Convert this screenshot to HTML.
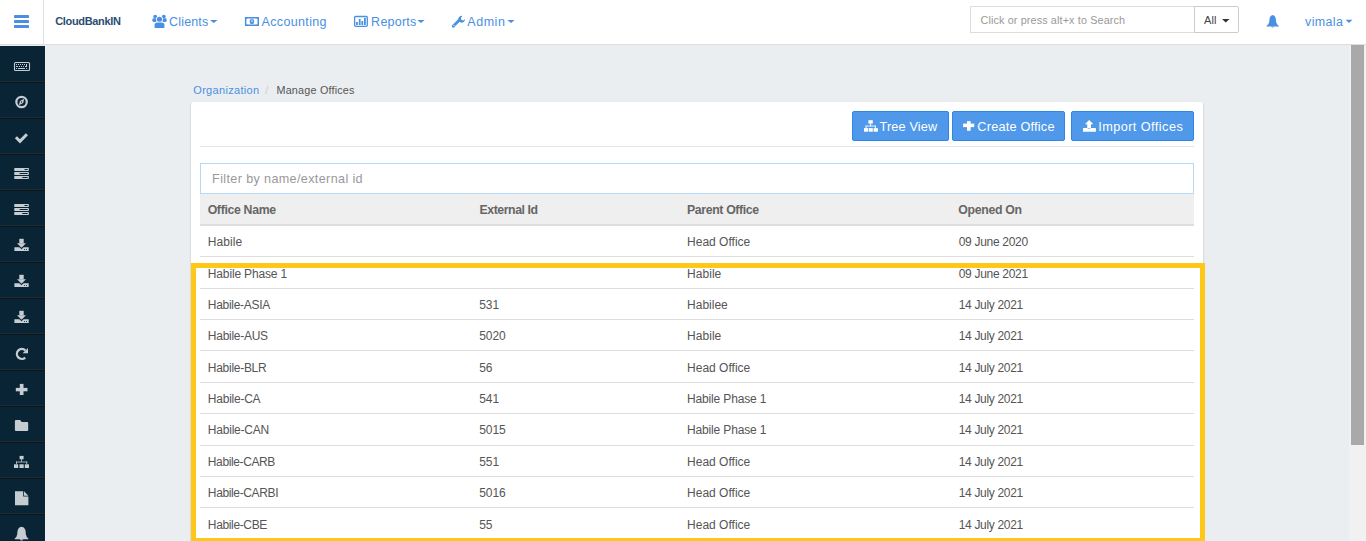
<!DOCTYPE html>
<html><head><meta charset="utf-8">
<style>
*{box-sizing:border-box;margin:0;padding:0}
html,body{width:1366px;height:541px;overflow:hidden}
body{position:relative;background:#ebeef1;font-family:"Liberation Sans",sans-serif;color:#555}
.abs{position:absolute}
.t{position:absolute;white-space:nowrap;line-height:1;font-family:"Liberation Sans",sans-serif}
#nav{left:0;top:0;width:1366px;height:45px;background:#fff;border-bottom:1px solid #ddd}
#vdiv{left:43px;top:0;width:1px;height:44px;background:#e2e2e2}
#side{left:0;top:46px;width:45px;height:495px;background:#092434}
#sidestrip{left:45px;top:45px;width:1px;height:496px;background:#f0f1f2}
.sep{position:absolute;left:0;width:45px;height:2px;border-top:1px solid #1e2c35;background:#0e1418}
#scroll{left:1349px;top:45px;width:17px;height:496px;background:#f1f1f1}
#thumb{left:1351px;top:45px;width:13px;height:400px;background:#a9a9a9}
#card{left:191px;top:102px;width:1012px;height:460px;background:#fff;border-radius:2px;box-shadow:0 1px 2px rgba(0,0,0,0.24)}
.btn{top:111px;height:30px;background:#5098e9;border:1px solid #2f86e6;border-radius:2px}
#hr{left:200px;top:146px;width:994px;height:1px;background:#e5e5e5}
#filter{left:200px;top:163px;width:994px;height:31px;border:1px solid #b5d9f8;background:#fff}
#thead{left:200px;top:194px;width:994px;height:32px;background:#efefef;border-bottom:2px solid #ddd}
.ln{position:absolute;left:200px;width:994px;height:1px;background:#ddd}
#hl{left:191px;top:263px;width:1014px;height:280px;border:5px solid #ffc819}
#search{left:970px;top:6px;width:225px;height:27px;border:1px solid #ddd;border-right:none;background:#fff}
#allbtn{left:1194px;top:6px;width:45px;height:27px;border:1px solid #ccc;border-radius:0 2px 2px 0;background:#fff}
#ov{position:absolute;left:0;top:0;width:1366px;height:541px;pointer-events:none}
</style></head>
<body>
<div id="nav" class="abs"><div id="vdiv" class="abs"></div></div>
<div id="search" class="abs"></div>
<div id="allbtn" class="abs"></div>
<div id="side" class="abs">
<div class="sep" style="top:35px"></div><div class="sep" style="top:71px"></div><div class="sep" style="top:107px"></div><div class="sep" style="top:143px"></div><div class="sep" style="top:179px"></div><div class="sep" style="top:215px"></div><div class="sep" style="top:251px"></div><div class="sep" style="top:287px"></div><div class="sep" style="top:323px"></div><div class="sep" style="top:359px"></div><div class="sep" style="top:395px"></div><div class="sep" style="top:431px"></div><div class="sep" style="top:467px"></div>
</div>
<div id="sidestrip" class="abs"></div>
<div id="scroll" class="abs"></div>
<div id="thumb" class="abs"></div>
<div id="card" class="abs"></div>
<div class="abs btn" style="left:852px;width:97px"></div>
<div class="abs btn" style="left:952px;width:113px"></div>
<div class="abs btn" style="left:1071px;width:123px"></div>
<div id="hr" class="abs"></div>
<div id="filter" class="abs"></div>
<div id="thead" class="abs"></div>
<div class="ln" style="top:256px"></div><div class="ln" style="top:288px"></div><div class="ln" style="top:319px"></div><div class="ln" style="top:350px"></div><div class="ln" style="top:382px"></div><div class="ln" style="top:413px"></div><div class="ln" style="top:445px"></div><div class="ln" style="top:476px"></div><div class="ln" style="top:507px"></div>
<div class="t" style="left:55.17px;top:15.69px;font-size:11px;color:#2b4d70;letter-spacing:-0.324px;font-weight:bold">CloudBankIN</div>
<div class="t" style="left:169.12px;top:15.92px;font-size:12.5px;color:#4a90e2;letter-spacing:0.152px">Clients</div>
<div class="t" style="left:261.62px;top:15.92px;font-size:12.5px;color:#4a90e2;letter-spacing:0.336px">Accounting</div>
<div class="t" style="left:371.12px;top:15.92px;font-size:12.5px;color:#4a90e2;letter-spacing:0.241px">Reports</div>
<div class="t" style="left:467.32px;top:15.92px;font-size:12.5px;color:#4a90e2;letter-spacing:0.525px">Admin</div>
<div class="t" style="left:1305.12px;top:15.52px;font-size:12.5px;color:#4a90e2;letter-spacing:0.332px">vimala</div>
<div class="t" style="left:980.48px;top:14.96px;font-size:10.8px;color:#999;letter-spacing:0.133px">Click or press alt+x to Search</div>
<div class="t" style="left:1203.97px;top:14.69px;font-size:11px;color:#444;letter-spacing:0.097px">All</div>
<div class="t" style="left:193.27px;top:84.79px;font-size:11px;color:#4a90e2;letter-spacing:0.318px">Organization</div>
<div class="t" style="left:265.27px;top:84.79px;font-size:11px;color:#ccc;letter-spacing:0.977px">/</div>
<div class="t" style="left:276.48px;top:84.96px;font-size:10.8px;color:#555;letter-spacing:0.199px">Manage Offices</div>
<div class="t" style="left:879.62px;top:120.85px;font-size:12.7px;color:#fff;letter-spacing:0.128px">Tree View</div>
<div class="t" style="left:977.32px;top:120.85px;font-size:12.7px;color:#fff;letter-spacing:0.222px">Create Office</div>
<div class="t" style="left:1098.22px;top:120.85px;font-size:12.7px;color:#fff;letter-spacing:0.444px">Import Offices</div>
<div class="t" style="left:212.12px;top:172.93px;font-size:12.6px;color:#999;letter-spacing:0.363px">Filter by name/external id</div>
<div class="t" style="left:207.63px;top:203.79px;font-size:12.3px;color:#666;letter-spacing:-0.324px;font-weight:bold">Office Name</div>
<div class="t" style="left:479.53px;top:203.79px;font-size:12.3px;color:#666;letter-spacing:-0.434px;font-weight:bold">External Id</div>
<div class="t" style="left:687.03px;top:203.79px;font-size:12.3px;color:#666;letter-spacing:-0.365px;font-weight:bold">Parent Office</div>
<div class="t" style="left:958.33px;top:203.79px;font-size:12.3px;color:#666;letter-spacing:-0.331px;font-weight:bold">Opened On</div>
<div class="t" style="left:207.84px;top:235.84px;font-size:12px;color:#555;letter-spacing:0.044px">Habile</div>
<div class="t" style="left:687.04px;top:235.84px;font-size:12px;color:#555;letter-spacing:0.012px">Head Office</div>
<div class="t" style="left:958.64px;top:235.84px;font-size:12px;color:#555;letter-spacing:-0.295px">09 June 2020</div>
<div class="t" style="left:207.84px;top:267.84px;font-size:12px;color:#555;letter-spacing:-0.153px">Habile Phase 1</div>
<div class="t" style="left:687.04px;top:267.84px;font-size:12px;color:#555;letter-spacing:0.044px">Habile</div>
<div class="t" style="left:958.64px;top:267.84px;font-size:12px;color:#555;letter-spacing:-0.295px">09 June 2021</div>
<div class="t" style="left:207.84px;top:298.84px;font-size:12px;color:#555;letter-spacing:-0.296px">Habile-ASIA</div>
<div class="t" style="left:479.24px;top:298.84px;font-size:12px;color:#555;letter-spacing:-0.090px">531</div>
<div class="t" style="left:687.04px;top:298.84px;font-size:12px;color:#555;letter-spacing:0.010px">Habilee</div>
<div class="t" style="left:958.64px;top:298.84px;font-size:12px;color:#555;letter-spacing:-0.309px">14 July 2021</div>
<div class="t" style="left:207.84px;top:329.84px;font-size:12px;color:#555;letter-spacing:-0.270px">Habile-AUS</div>
<div class="t" style="left:479.24px;top:329.84px;font-size:12px;color:#555;letter-spacing:-0.089px">5020</div>
<div class="t" style="left:687.04px;top:329.84px;font-size:12px;color:#555;letter-spacing:0.044px">Habile</div>
<div class="t" style="left:958.64px;top:329.84px;font-size:12px;color:#555;letter-spacing:-0.309px">14 July 2021</div>
<div class="t" style="left:207.84px;top:361.84px;font-size:12px;color:#555;letter-spacing:-0.279px">Habile-BLR</div>
<div class="t" style="left:479.24px;top:361.84px;font-size:12px;color:#555;letter-spacing:-0.093px">56</div>
<div class="t" style="left:687.04px;top:361.84px;font-size:12px;color:#555;letter-spacing:0.012px">Head Office</div>
<div class="t" style="left:958.64px;top:361.84px;font-size:12px;color:#555;letter-spacing:-0.309px">14 July 2021</div>
<div class="t" style="left:207.84px;top:392.84px;font-size:12px;color:#555;letter-spacing:-0.236px">Habile-CA</div>
<div class="t" style="left:479.24px;top:392.84px;font-size:12px;color:#555;letter-spacing:-0.090px">541</div>
<div class="t" style="left:687.04px;top:392.84px;font-size:12px;color:#555;letter-spacing:-0.153px">Habile Phase 1</div>
<div class="t" style="left:958.64px;top:392.84px;font-size:12px;color:#555;letter-spacing:-0.309px">14 July 2021</div>
<div class="t" style="left:207.84px;top:423.84px;font-size:12px;color:#555;letter-spacing:-0.211px">Habile-CAN</div>
<div class="t" style="left:479.24px;top:423.84px;font-size:12px;color:#555;letter-spacing:-0.089px">5015</div>
<div class="t" style="left:687.04px;top:423.84px;font-size:12px;color:#555;letter-spacing:-0.153px">Habile Phase 1</div>
<div class="t" style="left:958.64px;top:423.84px;font-size:12px;color:#555;letter-spacing:-0.309px">14 July 2021</div>
<div class="t" style="left:207.84px;top:455.84px;font-size:12px;color:#555;letter-spacing:-0.383px">Habile-CARB</div>
<div class="t" style="left:479.24px;top:455.84px;font-size:12px;color:#555;letter-spacing:-0.090px">551</div>
<div class="t" style="left:687.04px;top:455.84px;font-size:12px;color:#555;letter-spacing:0.012px">Head Office</div>
<div class="t" style="left:958.64px;top:455.84px;font-size:12px;color:#555;letter-spacing:-0.309px">14 July 2021</div>
<div class="t" style="left:207.84px;top:486.84px;font-size:12px;color:#555;letter-spacing:-0.362px">Habile-CARBI</div>
<div class="t" style="left:479.24px;top:486.84px;font-size:12px;color:#555;letter-spacing:-0.089px">5016</div>
<div class="t" style="left:687.04px;top:486.84px;font-size:12px;color:#555;letter-spacing:0.012px">Head Office</div>
<div class="t" style="left:958.64px;top:486.84px;font-size:12px;color:#555;letter-spacing:-0.309px">14 July 2021</div>
<div class="t" style="left:207.84px;top:518.84px;font-size:12px;color:#555;letter-spacing:-0.356px">Habile-CBE</div>
<div class="t" style="left:479.24px;top:518.84px;font-size:12px;color:#555;letter-spacing:-0.093px">55</div>
<div class="t" style="left:687.04px;top:518.84px;font-size:12px;color:#555;letter-spacing:0.012px">Head Office</div>
<div class="t" style="left:958.64px;top:518.84px;font-size:12px;color:#555;letter-spacing:-0.309px">14 July 2021</div>
<div id="hl" class="abs"></div>
<svg id="ov" width="1366" height="541">
<g fill="#4a90e2">
<rect x="14" y="15" width="15" height="3" rx="0.4"/>
<rect x="14" y="20" width="15" height="3" rx="0.4"/>
<rect x="14" y="25" width="15" height="3" rx="0.4"/>
<!-- users -->
<circle cx="155.2" cy="16.6" r="1.9"/>
<rect x="152.3" y="18.3" width="4.6" height="3.6" rx="1.4"/>
<circle cx="163.8" cy="16.6" r="1.9"/>
<rect x="162.1" y="18.3" width="4.6" height="3.6" rx="1.4"/>
<circle cx="159.5" cy="19.3" r="3.4" fill="#fff"/>
<circle cx="159.5" cy="19.3" r="2.6"/>
<path d="M153.8 28.4 V25.3 Q153.8 21.7 157.2 21.7 H161.8 Q165.2 21.7 165.2 25.3 V28.4 Z" fill="#fff"/>
<path d="M154.6 27.9 V25.2 Q154.6 22.5 157.3 22.5 H161.7 Q164.4 22.5 164.4 25.2 V27.9 Z"/>
<!-- money -->
<path fill-rule="evenodd" d="M244.9 16.9 H259 V25.9 H244.9 Z M246.4 18.4 Q247.3 19.5 247.3 18.4 H256.6 Q256.6 19.5 257.5 18.4 V24.4 Q256.6 23.4 256.6 24.4 H247.3 Q247.3 23.4 246.4 24.4 Z"/>
<ellipse cx="251.9" cy="21.4" rx="2.2" ry="2.7"/>
<rect x="251.5" y="19.6" width="0.9" height="2.6" fill="#fff"/>
<!-- reports -->
<rect x="354.6" y="16.5" width="12.7" height="9.8" rx="1" fill="none" stroke="#4a90e2" stroke-width="1.3"/>
<rect x="356" y="22" width="1.8" height="3"/>
<rect x="358.8" y="19" width="1.8" height="6"/>
<rect x="361.4" y="21" width="1.8" height="4"/>
<rect x="364" y="18" width="1.8" height="7"/>
<!-- wrench -->
<path d="M453.2 26.2 L458.9 20.5" stroke="#4a90e2" stroke-width="2.8" stroke-linecap="round"/>
<path d="M458.2 19.6 A3.6 3.6 0 0 1 462.3 15.9 L460.9 17.7 L461.3 19.8 L463.4 20.4 L465.1 19.1 A3.6 3.6 0 0 1 460.6 22.6 Z"/>
<circle cx="454" cy="25.5" r="0.6" fill="#fff"/>
<!-- carets -->
<path d="M210 19.9 H217.6 L213.8 23 Z"/>
<path d="M417.3 20 H424.6 L421 23 Z"/>
<path d="M507.3 20 H514.7 L511 23 Z"/>
<path d="M1345.6 19.8 H1352.5 L1349 23 Z"/>
<!-- bell -->
<path d="M1272.6 15 Q1274.6 15.3 1275.4 17.3 Q1276 19 1276 21.5 Q1276.4 24.3 1278.8 26 V26.4 H1266.5 V26 Q1268.9 24.3 1269.3 21.5 Q1269.3 19 1269.9 17.3 Q1270.7 15.3 1272.6 15 Z"/>
<path d="M1271.2 26.5 A1.5 1.4 0 0 0 1274.1 26.5 Z"/>
</g>
<path d="M1222 19 H1229.5 L1225.75 22.4 Z" fill="#333"/>
<!-- button icons -->
<g fill="#fff">
<rect x="868.4" y="120.2" width="4.4" height="3.4"/>
<rect x="870.2" y="123.5" width="0.9" height="2.6"/>
<rect x="865.6" y="125.6" width="10.2" height="0.9"/>
<rect x="865.6" y="125.6" width="0.9" height="2.6"/>
<rect x="874.9" y="125.6" width="0.9" height="2.6"/>
<rect x="864" y="128.1" width="4.1" height="3.6"/>
<rect x="868.7" y="128.1" width="4.1" height="3.6"/>
<rect x="873.6" y="128.1" width="4.3" height="3.6"/>
<rect x="967" y="121.1" width="3.6" height="9.7"/>
<rect x="963.1" y="123.6" width="11.1" height="3.5"/>
<path d="M1089.1 119.9 L1093.4 124.2 H1091 V128.3 H1087.2 V124.2 H1084.9 Z"/>
<path d="M1083 128.1 H1087.3 Q1087.6 128.9 1089.1 128.9 Q1090.6 128.9 1090.9 128.1 H1095.9 V131.7 H1083 Z"/>
</g>
<!-- sidebar icons -->
<g fill="#c5cdd2">
<g>
<rect x="14.5" y="62.5" width="15" height="8" rx="1" fill="none" stroke="#c5cdd2" stroke-width="1.1"/>
<rect x="16" y="64" width="1" height="1"/><rect x="18" y="64" width="1" height="1"/><rect x="20" y="64" width="1" height="1"/><rect x="22" y="64" width="1" height="1"/><rect x="24" y="64" width="1" height="1"/><rect x="26" y="64" width="1" height="3"/>
<rect x="16" y="66" width="2" height="1"/><rect x="19" y="66" width="1" height="1"/><rect x="21" y="66" width="1" height="1"/><rect x="23" y="66" width="1" height="1"/><rect x="25" y="66" width="1" height="1"/>
<rect x="16" y="68" width="1" height="1"/><rect x="18" y="68" width="7" height="1"/><rect x="26" y="68" width="1" height="1"/>
</g>
<circle cx="21.55" cy="102" r="5.2" fill="none" stroke="#c5cdd2" stroke-width="2.2"/>
<path d="M24.2 98.7 L23.2 103.1 L18.9 105.3 L19.9 100.9 Z"/>
<circle cx="21.55" cy="102" r="0.7" fill="#092434"/>
<path d="M15.9 137.2 L20 141.3 L26.9 134.3" fill="none" stroke="#c5cdd2" stroke-width="3" stroke-linejoin="miter"/>
</g>
<g id="tasks" fill="#c5cdd2">
<rect x="14.2" y="168" width="14.7" height="3" rx="0.7"/>
<rect x="14.2" y="172" width="14.7" height="3" rx="0.7"/>
<rect x="14.2" y="176" width="14.7" height="3" rx="0.7"/>
<g fill="#092434">
<rect x="24.4" y="169" width="3.4" height="1.1" rx="0.5"/>
<rect x="19.5" y="173" width="8.3" height="1.1" rx="0.5"/>
<rect x="22.2" y="177" width="5.6" height="1.1" rx="0.5"/>
</g>
</g>
<use href="#tasks" y="36"/>
<g id="dl" fill="#c5cdd2">
<rect x="19.3" y="238.8" width="4.4" height="4.6"/>
<path d="M17 243.2 H26 L21.5 247.7 Z"/>
<path d="M14.4 247.2 H19.4 L21.5 249.2 L23.6 247.2 H28.7 V251 H14.4 Z"/>
<rect x="24" y="249.1" width="0.9" height="0.9" fill="#092434"/>
<rect x="26" y="249.1" width="0.9" height="0.9" fill="#092434"/>
</g>
<use href="#dl" y="36"/>
<use href="#dl" y="72"/>
<g fill="#c5cdd2">
<path d="M25.3 350.4 A4.95 4.95 0 1 0 25.2 357.6" fill="none" stroke="#c5cdd2" stroke-width="2.3"/>
<path d="M28 347.9 V353.3 H22.6 Z"/>
<rect x="19.8" y="383.9" width="3.7" height="11.1"/>
<rect x="15.8" y="387.9" width="11.7" height="3.4"/>
<path d="M14.9 421 Q14.9 419.9 16 419.9 H20.2 L21.6 422.1 H27.2 Q28.2 422.1 28.2 423.1 V430 Q28.2 431 27.2 431 H16 Q14.9 431 14.9 430 Z"/>
<rect x="19.6" y="455.9" width="4" height="3.4"/>
<rect x="21.2" y="459.2" width="0.8" height="2.6"/>
<rect x="16" y="461.6" width="11.2" height="0.8"/>
<rect x="16" y="461.6" width="0.8" height="2.6"/>
<rect x="26.4" y="461.6" width="0.8" height="2.6"/>
<rect x="14" y="464.3" width="4.2" height="3.7"/>
<rect x="19.5" y="464.3" width="4.2" height="3.7"/>
<rect x="24.8" y="464.3" width="4.2" height="3.7"/>
<path d="M15 491.3 H23.2 V496.4 H28.4 V505.3 H15 Z"/>
<path d="M24 491.3 L28.4 495.7 H24 Z"/>
<path d="M21.5 526.8 Q24.2 527.1 25.2 529.5 Q25.8 531.5 25.8 534 Q26.2 537 28.4 538.6 V539.2 H14.7 V538.6 Q16.9 537 17.3 534 Q17.3 531.5 17.9 529.5 Q18.9 527.1 21.5 526.8 Z"/>
<path d="M19.8 539.3 A1.8 1.7 0 0 0 23.3 539.3 Z"/>
</g>
</svg>

</body></html>
